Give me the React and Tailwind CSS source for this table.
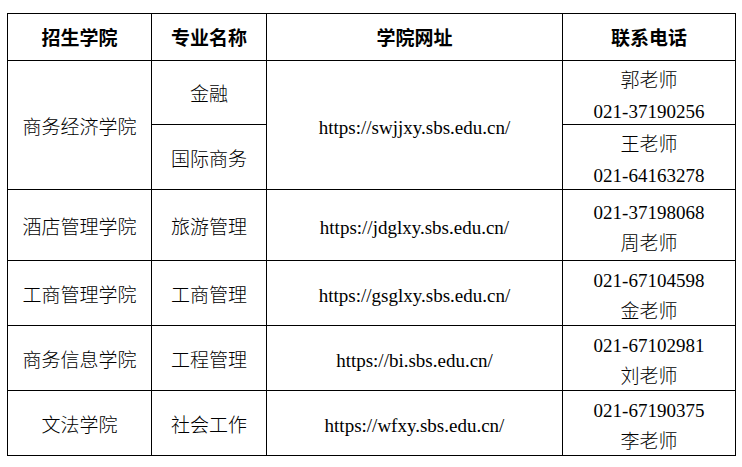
import React from 'react';

const rows = [
  { college: '酒店管理学院', major: '旅游管理', url: 'https://jdglxy.sbs.edu.cn/', phone: '021-37198068', teacher: '周老师', h: 'h-[71px]' },
  { college: '工商管理学院', major: '工商管理', url: 'https://gsglxy.sbs.edu.cn/', phone: '021-67104598', teacher: '金老师', h: 'h-[65px]' },
  { college: '商务信息学院', major: '工程管理', url: 'https://bi.sbs.edu.cn/', phone: '021-67102981', teacher: '刘老师', h: 'h-[65px]' },
  { college: '文法学院', major: '社会工作', url: 'https://wfxy.sbs.edu.cn/', phone: '021-67190375', teacher: '李老师', h: 'h-[65px]' },
];

const cell = 'border border-black text-center align-middle px-0 pb-0';
const single = `${cell} pt-[6px]`;
const contact = `${cell} pt-0 leading-[31px]`;

const App = () => {
  return (
    <div className="w-[742px] h-[467px] bg-white pt-[13px] pl-[7px] text-black text-[19px] font-['Liberation_Serif','Noto_Sans_CJK_SC',serif]">
      <table className="border-collapse table-fixed w-[728px]">
        <colgroup>
          <col className="w-[144px]" />
          <col className="w-[115px]" />
          <col className="w-[296px]" />
          <col className="w-[173px]" />
        </colgroup>
        <thead>
          <tr className="h-[47px]">
            <th className={`${cell} pt-[5px] font-bold`}>招生学院</th>
            <th className={`${cell} pt-[5px] font-bold`}>专业名称</th>
            <th className={`${cell} pt-[5px] font-bold`}>学院网址</th>
            <th className={`${cell} pt-[5px] font-bold`}>联系电话</th>
          </tr>
        </thead>
        <tbody className="font-light">
          <tr className="h-[64px]">
            <td rowSpan={2} className={single}>商务经济学院</td>
            <td className={single}>金融</td>
            <td rowSpan={2} className={`${single} font-normal`}>https://swjjxy.sbs.edu.cn/</td>
            <td className={contact}>
              <div className="translate-y-[3px]">
                <div>郭老师</div>
                <div className="font-normal">021-37190256</div>
              </div>
            </td>
          </tr>
          <tr className="h-[65px]">
            <td className={single}>国际商务</td>
            <td className={contact}>
              <div className="translate-y-[3px]">
                <div>王老师</div>
                <div className="font-normal">021-64163278</div>
              </div>
            </td>
          </tr>
          {rows.map((r) => (
            <tr key={r.college} className={r.h}>
              <td className={single}>{r.college}</td>
              <td className={single}>{r.major}</td>
              <td className={`${single} font-normal`}>{r.url}</td>
              <td className={contact}>
                <div className="translate-y-[3px]">
                  <div className="font-normal">{r.phone}</div>
                  <div>{r.teacher}</div>
                </div>
              </td>
            </tr>
          ))}
        </tbody>
      </table>
    </div>
  );
};

export default App;
